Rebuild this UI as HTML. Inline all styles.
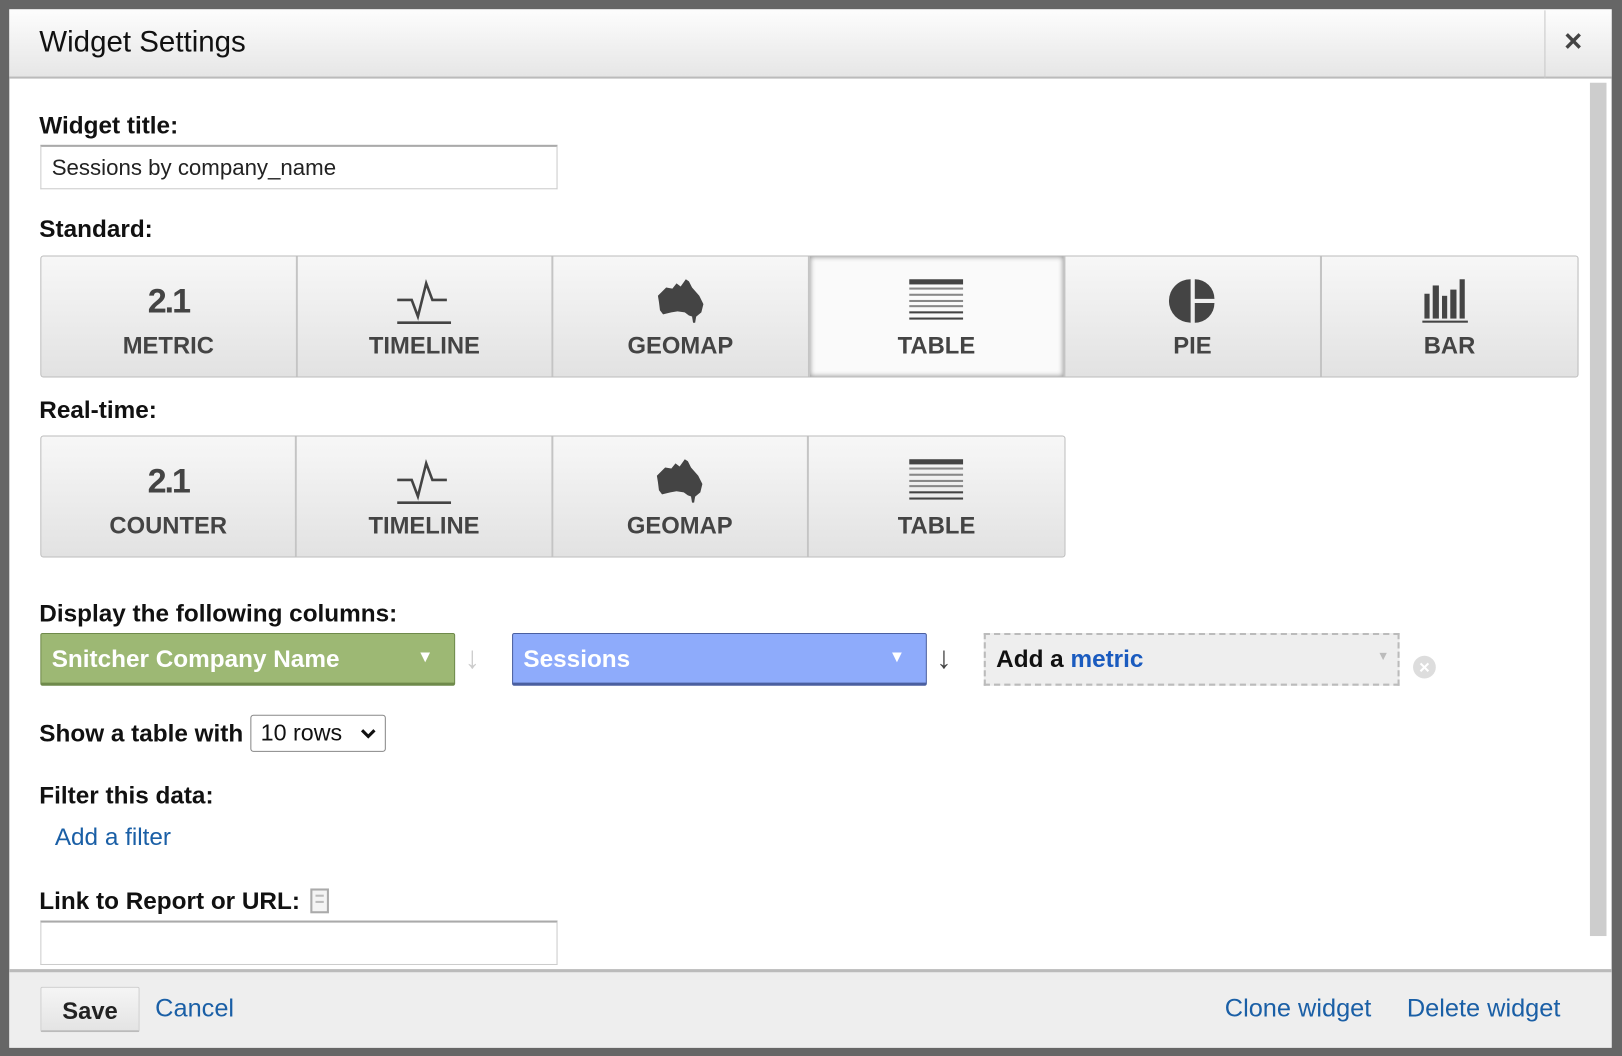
<!DOCTYPE html>
<html><head><meta charset="utf-8"><style>
*{box-sizing:border-box;margin:0;padding:0}
html,body{width:1622px;height:1056px;overflow:hidden;background:#666}
#s{position:absolute;left:0;top:0;width:1568px;height:1021px;transform:scale(1.03444,1.0343);transform-origin:0 0;font-family:"Liberation Sans",sans-serif;color:#222}
.a{position:absolute}
.lbl{position:absolute;left:38px;font-size:23.5px;font-weight:bold;color:#111;line-height:26px}
.inp{position:absolute;left:39px;width:500px;height:43px;border:1px solid #ccc;border-top:2px solid #aaa;background:#fff;font-size:21.5px;padding:8px 10px}
.grp{position:absolute;display:flex;border:1px solid #bbb;border-radius:3px;overflow:hidden}
.b{width:247.6px;height:100%;border-right:2px solid #c4c4c4;background:linear-gradient(#f7f7f7,#e2e2e2);position:relative;text-align:center}
.b:last-child{border-right:none}
.b .t{position:absolute;left:0;right:0;top:73px;font-size:23px;font-weight:bold;color:#444}
.b svg{position:absolute;left:50%;top:20px;transform:translateX(-50%)}
.b.sel{background:#fafafa;box-shadow:inset 0 0 5px rgba(0,0,0,.45)}
.num{position:absolute;left:0;right:0;top:24px;font-size:33px;font-weight:bold;color:#444;letter-spacing:-2px}
a{color:#1a5fa6;text-decoration:none}
</style></head><body><div id="s">
<div class="a" style="left:9px;top:9px;width:1549px;height:1004px;background:#fff"></div>
<div class="a" style="left:9px;top:9px;width:1549px;height:67px;background:linear-gradient(#fdfdfd,#e6e6e6);border-bottom:2px solid #bbb"></div>
<div class="a" style="left:38px;top:25px;font-size:28.5px;color:#111">Widget Settings</div>
<div class="a" style="left:1493px;top:10px;width:1px;height:66px;background:#c8c8c8"></div>
<div class="a" style="left:1512px;top:24px;font-size:30px;font-weight:bold;color:#444">×</div>
<div class="a" style="left:1537px;top:80px;width:16px;height:825px;background:#cdcdcd"></div>

<div class="lbl" style="top:108px">Widget title:</div>
<div class="inp" style="top:140px">Sessions by company_name</div>
<div class="lbl" style="top:208px">Standard:</div>
<div class="grp" style="left:39px;top:247px;width:1487px;height:118px">
 <div class="b"><div class="num">2.1</div><div class="t">METRIC</div></div>
 <div class="b"><svg width="56" height="46" viewBox="0 0 56 46"><path d="M2 22h14l6 16 8-32 6 16h14" fill="none" stroke="#444" stroke-width="2.5"/><path d="M2 44h52" stroke="#444" stroke-width="2.5"/></svg><div class="t">TIMELINE</div></div>
 <div class="b"><svg width="52" height="46" viewBox="0 0 52 46"><path d="M4 18l8-8 6 1 4-5 4 3 5-7 3 2 3 6 7 8 4 8-2 8-6 5-6-2-4-3-7-1-6 1-8 2-3-4-1-8z M37 38l4 0-1 6-2 0z" fill="#444"/></svg><div class="t">GEOMAP</div></div>
 <div class="b sel"><svg width="56" height="46" viewBox="0 0 56 46"><rect x="2" y="2" width="52" height="5" fill="#444"/><g fill="#888"><rect x="2" y="10" width="52" height="2"/><rect x="2" y="16" width="52" height="2"/><rect x="2" y="22" width="52" height="2"/><rect x="2" y="27" width="52" height="2"/></g><g fill="#444"><rect x="2" y="33" width="52" height="2"/><rect x="2" y="39" width="52" height="2"/></g></svg><div class="t">TABLE</div></div>
 <div class="b"><svg width="46" height="46" viewBox="0 0 46 46"><path d="M21 2A21 21 0 0 0 21 44z" fill="#444"/><path d="M25 2A19 19 0 0 1 44 21H25z" fill="#444"/><path d="M25 25H44A19 19 0 0 1 25 44z" fill="#444"/></svg><div class="t">PIE</div></div>
 <div class="b"><svg width="56" height="46" viewBox="0 0 56 46"><g fill="#444"><rect x="4" y="16" width="5" height="24"/><rect x="12" y="8" width="6" height="32"/><rect x="21" y="18" width="5" height="22"/><rect x="29" y="12" width="6" height="28"/><rect x="38" y="2" width="5" height="38"/><rect x="2" y="42" width="44" height="2"/></g></svg><div class="t">BAR</div></div>
</div>
<div class="lbl" style="top:383px">Real-time:</div>
<div class="grp" style="left:39px;top:421px;width:991px;height:118px">
 <div class="b"><div class="num">2.1</div><div class="t">COUNTER</div></div>
 <div class="b"><svg width="56" height="46" viewBox="0 0 56 46"><path d="M2 22h14l6 16 8-32 6 16h14" fill="none" stroke="#444" stroke-width="2.5"/><path d="M2 44h52" stroke="#444" stroke-width="2.5"/></svg><div class="t">TIMELINE</div></div>
 <div class="b"><svg width="52" height="46" viewBox="0 0 52 46"><path d="M4 18l8-8 6 1 4-5 4 3 5-7 3 2 3 6 7 8 4 8-2 8-6 5-6-2-4-3-7-1-6 1-8 2-3-4-1-8z M37 38l4 0-1 6-2 0z" fill="#444"/></svg><div class="t">GEOMAP</div></div>
 <div class="b"><svg width="56" height="46" viewBox="0 0 56 46"><rect x="2" y="2" width="52" height="5" fill="#444"/><g fill="#888"><rect x="2" y="10" width="52" height="2"/><rect x="2" y="16" width="52" height="2"/><rect x="2" y="22" width="52" height="2"/><rect x="2" y="27" width="52" height="2"/></g><g fill="#444"><rect x="2" y="33" width="52" height="2"/><rect x="2" y="39" width="52" height="2"/></g></svg><div class="t">TABLE</div></div>
</div>

<div class="lbl" style="top:580px">Display the following columns:</div>
<div class="a" style="left:39px;top:612px;width:401px;height:51px;background:#9db874;border:1px solid #6f8a4b;border-bottom:3px solid #6f8a4b;border-radius:2px;color:#fff;font-weight:bold;font-size:23.5px;padding:11px 10px">Snitcher Company Name<span style="position:absolute;right:20px;top:14px;font-size:16px">▼</span></div>
<div class="a" style="left:449px;top:620px;font-size:30px;color:#ccc;font-weight:bold">↓</div>
<div class="a" style="left:495px;top:612px;width:401px;height:51px;background:#8eabfb;border:1px solid #4a5fa0;border-bottom:3px solid #4a5fa0;border-radius:2px;color:#fff;font-weight:bold;font-size:23.5px;padding:11px 10px">Sessions<span style="position:absolute;right:20px;top:14px;font-size:16px">▼</span></div>
<div class="a" style="left:905px;top:620px;font-size:30px;color:#444;font-weight:bold">↓</div>
<div class="a" style="left:951px;top:612px;width:402px;height:51px;background:#eee;border:2px dashed #bbb;font-weight:bold;font-size:23.5px;padding:10px 10px;color:#111">Add a <span style="color:#1a5bbf">metric</span><span style="position:absolute;right:8px;top:13px;font-size:12px;color:#bbb">▼</span></div>
<div class="a" style="left:1366px;top:634px;width:22px;height:22px;border-radius:50%;background:#ddd;color:#fff;font-size:18px;line-height:22px;text-align:center;font-weight:bold">×</div>

<div class="lbl" style="top:696px">Show a table with</div>
<div class="a" style="left:242px;top:691px;width:131px;height:36px;border:1px solid #888;border-radius:3px;font-size:22.5px;padding:4px 9px;color:#111">10 rows<svg style="position:absolute;right:8px;top:12px" width="16" height="11" viewBox="0 0 16 11"><path d="M2 2l6 6 6-6" fill="none" stroke="#111" stroke-width="3"/></svg></div>
<div class="lbl" style="top:756px">Filter this data:</div>
<div class="a" style="left:53px;top:796px;font-size:23.5px"><a>Add a filter</a></div>
<div class="lbl" style="top:858px">Link to Report or URL:</div>
<div class="a" style="left:300px;top:859px;width:18px;height:24px;border:2px solid #aaa;background:#f4f4f4"><div style="margin:4px 3px;height:2px;background:#bbb"></div><div style="margin:3px 3px;height:2px;background:#bbb"></div></div>
<div class="inp" style="top:890px"></div>

<div class="a" style="left:9px;top:937px;width:1549px;height:76px;background:#eee;border-top:3px solid #bbb"></div>
<div class="a" style="left:39px;top:954px;width:96px;height:44px;border:1px solid #ccc;border-bottom:2px solid #bbb;border-radius:2px;background:linear-gradient(#f5f5f5,#e4e4e4);font-size:23px;font-weight:bold;text-align:center;line-height:44px;color:#222">Save</div>
<div class="a" style="left:150px;top:962px;font-size:24.5px"><a>Cancel</a></div>
<div class="a" style="left:1184px;top:962px;font-size:24.5px"><a>Clone widget</a></div>
<div class="a" style="left:1360px;top:962px;font-size:24.5px"><a>Delete widget</a></div>
</div></body></html>
